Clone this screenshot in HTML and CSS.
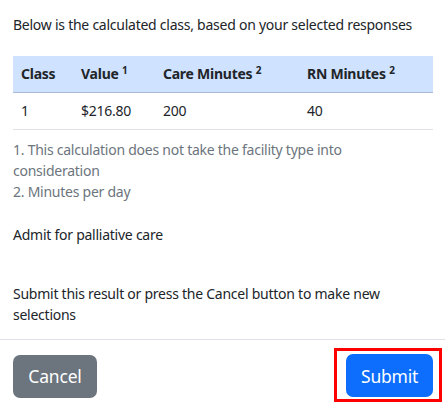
FILE: index.html
```html
<!DOCTYPE html>
<html>
<head>
<meta charset="utf-8">
<link rel="stylesheet" href="styles.css">
</head>
<body>
<div class="modal">
  <div class="modal-body">
    <p class="intro">Below is the calculated class, based on your selected responses</p>
    <table class="result">
      <colgroup>
        <col class="c1"><col class="c2"><col class="c3"><col class="c4">
      </colgroup>
      <thead>
        <tr><th>Class</th><th>Value <sup>1</sup></th><th>Care Minutes <sup>2</sup></th><th>RN Minutes <sup>2</sup></th></tr>
      </thead>
      <tbody>
        <tr><td>1</td><td>$216.80</td><td>200</td><td>40</td></tr>
      </tbody>
    </table>
    <div class="notes">
      <div>1. This calculation does not take the facility type into consideration</div>
      <div>2. Minutes per day</div>
    </div>
    <p class="admit">Admit for palliative care</p>
    <p class="submit-text">Submit this result or press the Cancel button to make new selections</p>
  </div>
  <div class="modal-footer">
    <button class="btn btn-secondary">Cancel</button>
    <span class="highlight"><button class="btn btn-primary">Submit</button></span>
  </div>
</div>
</body>
</html>
```
FILE: styles.css
```css
html, body {
  margin: 0;
  padding: 0;
  background: #fff;
}
body {
  font-family: "Noto Sans", "Open Sans", sans-serif;
  font-size: 14px;
  line-height: 21px;
  letter-spacing: -0.25px;
  color: #212529;
}
.modal {
  width: 445px;
}
.modal-body {
  padding: 14px 12px 14px 13px;
}
.intro {
  margin: 0 0 21px 0;
}
.result {
  width: 420px;
  border-collapse: collapse;
  table-layout: fixed;
}
.c1 { width: 60px; }
.c2 { width: 82px; }
.c3 { width: 144px; }
.c4 { width: 134px; }
.result th, .result td {
  text-align: left;
  padding: 7px 8px 8px 8px;
  vertical-align: top;
}
.result th {
  background: #cfe2ff;
  font-weight: 700;
  border-bottom: 1px solid #a9bad6;
}
.result td {
  border-bottom: 1px solid #dee2e6;
}
.result sup {
  font-size: 10px;
  line-height: 0;
  vertical-align: 5px;
}
.notes {
  margin-top: 9px;
  max-width: 400px;
  color: #6c757d;
}
.admit {
  margin: 22px 0 0 0;
}
.submit-text {
  margin: 38px 0 0 0;
  max-width: 400px;
}
.modal-footer {
  border-top: 1px solid #dee2e6;
  padding: 14px 12px 12px 13px;
  display: flex;
  justify-content: space-between;
  align-items: center;
}
.btn {
  font-family: inherit;
  font-size: 17.5px;
  line-height: 26px;
  letter-spacing: -0.2px;
  height: 43px;
  padding: 0 14px;
  border: 1px solid transparent;
  border-radius: 7px;
  color: #fff;
  cursor: pointer;
}
.btn-secondary {
  background: #6c757d;
  width: 84px;
}
.btn-primary {
  background: #0d6efd;
  width: 87px;
}
.highlight {
  display: inline-flex;
  border: 3px solid #ff0000;
  padding: 3px 6px 2px 9px;
  margin: -6px -9px -4px 0;
}
```
